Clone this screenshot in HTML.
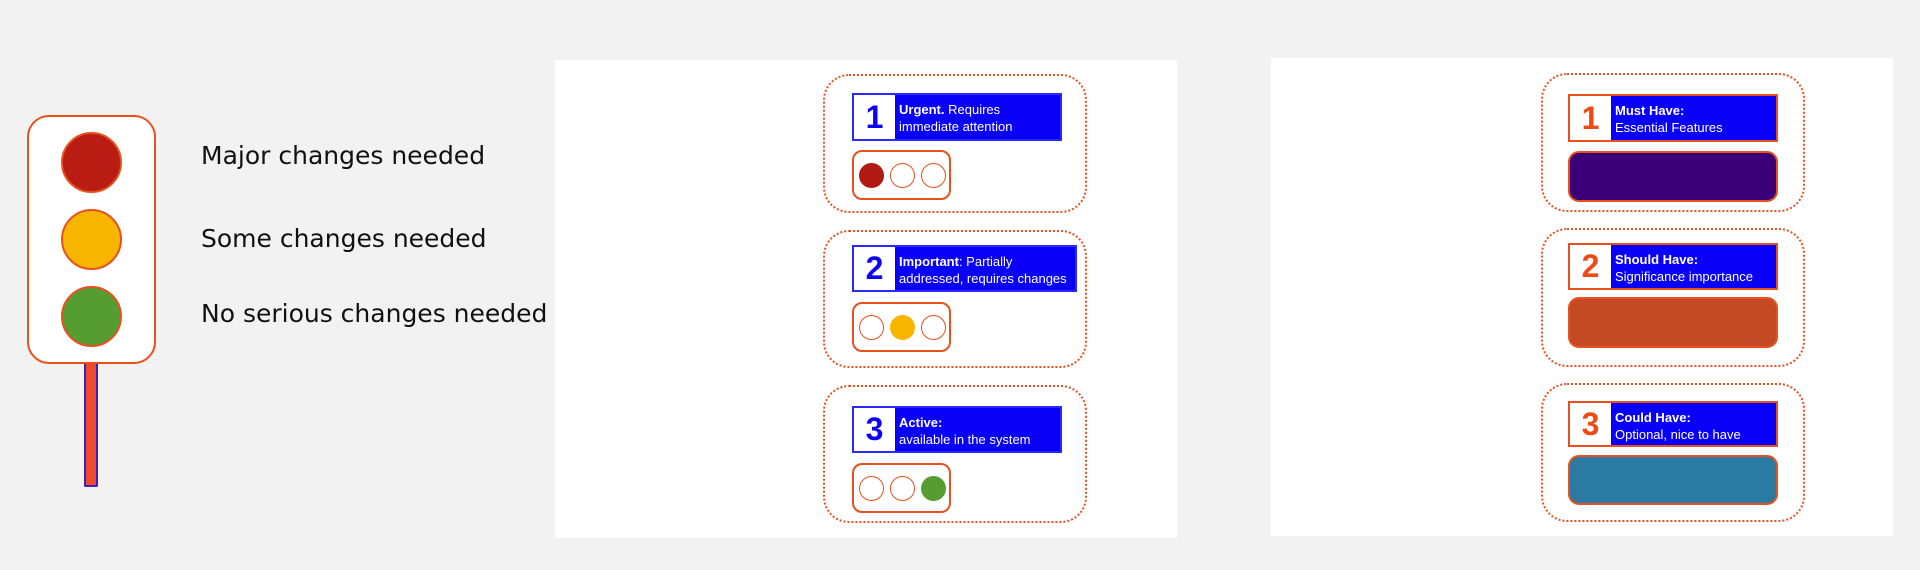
<!DOCTYPE html>
<html><head><meta charset="utf-8"><style>
*{margin:0;padding:0;box-sizing:border-box}
body{width:1920px;height:570px;background:#f2f2f2;position:relative;overflow:hidden;font-family:"Liberation Sans","DejaVu Sans",sans-serif}
.a{position:absolute}
.tl{left:27px;top:115px;width:129px;height:249px;background:#fff;border:2px solid #e8501e;border-radius:22px}
.lamp{position:absolute;left:61px;width:61px;height:61px;border-radius:50%;border:2px solid #e8501e}
.pole{left:84px;top:364px;width:14px;height:123px;background:#f04a2a;border:2px solid #3a20c0;border-top:none;border-radius:0 0 2px 2px}
.lbl{left:201px;color:#111;font-family:"DejaVu Sans","Liberation Sans",sans-serif;font-size:25px;white-space:nowrap}
.panel{background:#fff}
.card{border:2px dotted #e8501e;border-radius:26px}
.hd{background:#0a00f8;border:2px solid #2a2aff;color:#fff;font-size:13px;line-height:17px}
.hd .n{position:absolute;left:0;top:0;bottom:0;width:41px;background:#fff;font-weight:bold;font-size:32px;display:flex;align-items:center;justify-content:center}
.hd .t{position:absolute;left:45px;top:6px;white-space:nowrap}
.lb{border:2px solid #e8501e;border-radius:10px;background:#fff}
.c{position:absolute;top:11px;width:25px;height:25px;border-radius:50%;border:1.5px solid #e8501e}
.bar{border:2px solid #e8501e;border-radius:11px}
.hd2{border-color:#e8501e}
</style></head><body>
<div class="a tl"></div>
<div class="a lamp" style="top:132px;background:#b81c12"></div>
<div class="a lamp" style="top:209px;background:#f7b500"></div>
<div class="a lamp" style="top:286px;background:#559d30"></div>
<div class="a pole"></div>
<div class="a lbl" style="top:141px">Major changes needed</div>
<div class="a lbl" style="top:224px">Some changes needed</div>
<div class="a lbl" style="top:299px">No serious changes needed</div>

<div class="a panel" style="left:555px;top:60px;width:622px;height:478px"></div>
<div class="a card" style="left:823px;top:74px;width:264px;height:139px"></div>
<div class="a card" style="left:823px;top:230px;width:264px;height:138px"></div>
<div class="a card" style="left:823px;top:385px;width:264px;height:138px"></div>

<div class="a hd" style="left:852px;top:93px;width:210px;height:48px"><div class="n" style="color:#0a00f8">1</div><div class="t"><b>Urgent.</b> Requires<br>immediate attention</div></div>
<div class="a lb" style="left:852px;top:150px;width:99px;height:50px"><div class="c" style="left:5px;background:#b01a12;border-color:#b01a12"></div><div class="c" style="left:36px"></div><div class="c" style="left:67px"></div></div>

<div class="a hd" style="left:852px;top:245px;width:225px;height:47px"><div class="n" style="color:#0a00f8">2</div><div class="t"><b>Important</b>: Partially<br>addressed, requires changes</div></div>
<div class="a lb" style="left:852px;top:302px;width:99px;height:50px"><div class="c" style="left:5px"></div><div class="c" style="left:36px;background:#f7b500;border-color:#f7b500"></div><div class="c" style="left:67px"></div></div>

<div class="a hd" style="left:852px;top:406px;width:210px;height:47px"><div class="n" style="color:#0a00f8">3</div><div class="t"><b>Active:</b><br>available in the system</div></div>
<div class="a lb" style="left:852px;top:463px;width:99px;height:50px"><div class="c" style="left:5px"></div><div class="c" style="left:36px"></div><div class="c" style="left:67px;background:#559d30;border-color:#559d30"></div></div>

<div class="a panel" style="left:1271px;top:58px;width:622px;height:478px"></div>
<div class="a card" style="left:1541px;top:73px;width:264px;height:139px"></div>
<div class="a card" style="left:1541px;top:228px;width:264px;height:139px"></div>
<div class="a card" style="left:1541px;top:383px;width:264px;height:139px"></div>

<div class="a hd hd2" style="left:1568px;top:94px;width:210px;height:48px"><div class="n" style="color:#f04a14">1</div><div class="t"><b>Must Have:</b><br>Essential Features</div></div>
<div class="a bar" style="left:1568px;top:151px;width:210px;height:51px;background:#3b0077"></div>
<div class="a hd hd2" style="left:1568px;top:243px;width:210px;height:47px"><div class="n" style="color:#f04a14">2</div><div class="t"><b>Should Have:</b><br>Significance importance</div></div>
<div class="a bar" style="left:1568px;top:297px;width:210px;height:51px;background:#c44a25"></div>
<div class="a hd hd2" style="left:1568px;top:401px;width:210px;height:46px"><div class="n" style="color:#f04a14">3</div><div class="t"><b>Could Have:</b><br>Optional, nice to have</div></div>
<div class="a bar" style="left:1568px;top:455px;width:210px;height:50px;background:#2a7aa3"></div>
</body></html>
